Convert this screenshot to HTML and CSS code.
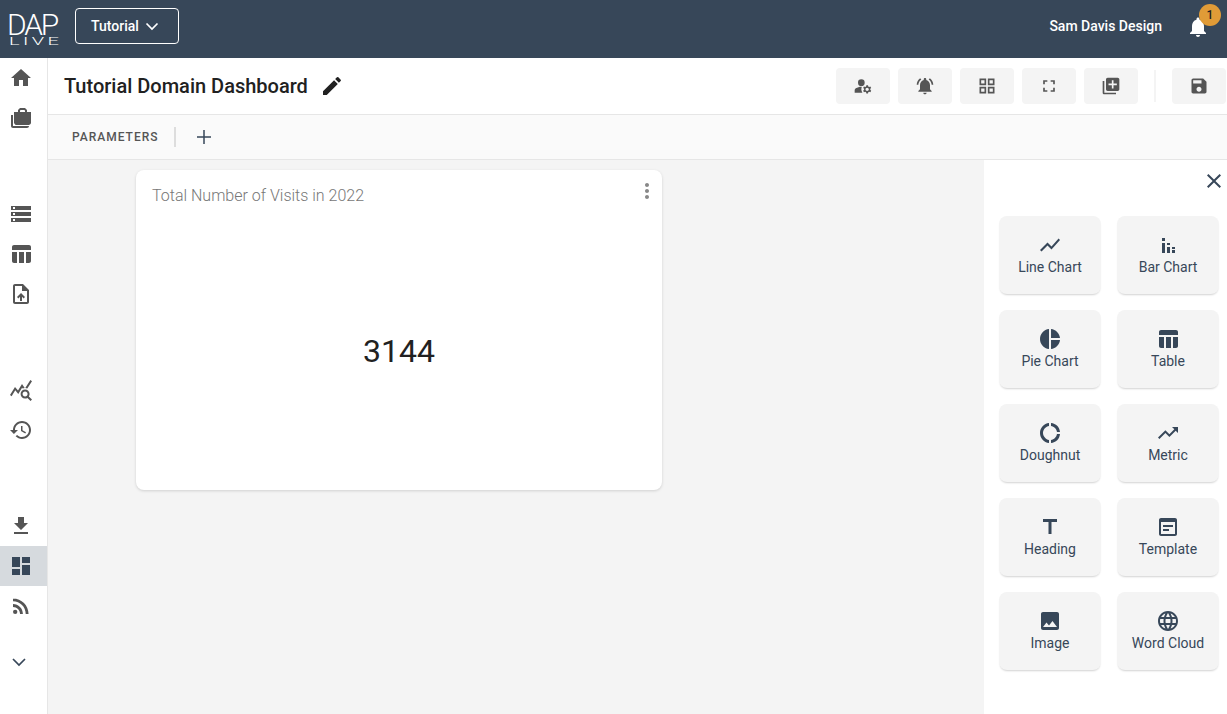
FILE: index.html
```html
<!DOCTYPE html>
<html>
<head>
    <meta charset="UTF-8">
    <title>Tutorial Domain Dashboard</title>
    <link rel="stylesheet" href="styles.css">
</head>
<body>
    <header class="topbar">
        <div class="logo">
            <span class="logo-main">DAP</span>
            <span class="logo-sub">LIVE</span>
        </div>
        <button class="domain-btn">
            <span>Tutorial</span>
            <svg class="icon chevron" viewBox="0 0 24 24"><path d="M6.5 9.5 12 15l5.5-5.5"/></svg>
        </button>
        <div class="topbar-right">
            <span class="user-name">Sam Davis Design</span>
            <div class="bell">
                <svg class="icon" viewBox="0 0 24 24"><path d="M12 22c1.1 0 2-.9 2-2h-4c0 1.1.9 2 2 2zm6-6v-5c0-3.07-1.63-5.64-4.5-6.32V4c0-.83-.67-1.5-1.5-1.5s-1.5.67-1.5 1.5v.68C7.64 5.36 6 7.92 6 11v5l-2 2v1h16v-1l-2-2z"/></svg>
                <span class="badge">1</span>
            </div>
        </div>
    </header>

    <div class="shell">
        <nav class="sidebar">
            <div class="nav-group">
                <a class="nav-item"><svg class="icon" viewBox="0 0 24 24"><path d="M10 20v-6h4v6h5v-8h3L12 3 2 12h3v8z"/></svg></a>
                <a class="nav-item"><svg class="icon" viewBox="0 0 24 24"><path d="M18 6V4l-2-2h-5L9 4v2H5v11s1 2 2 2h13s2-.98 2-2V6h-4zM4 9H2v11c0 1.11.89 2 2 2h14c1.11 0 2-.89 2-2H4V9zm7-4c0-.55.53-1 1-1h3c.46 0 1 .54 1 1v1h-5V5z"/></svg></a>
            </div>
            <div class="nav-group">
                <a class="nav-item"><svg class="icon" viewBox="0 0 24 24"><path d="M2 20h20v-4H2v4zm2-3h2v2H4v-2zM2 4v4h20V4H2zm4 3H4V5h2v2zm-4 7h20v-4H2v4zm2-3h2v2H4v-2z"/></svg></a>
                <a class="nav-item"><svg class="icon" viewBox="0 0 24 24"><path d="M10 10.02h5V21h-5zM17 21h3c1.1 0 2-.9 2-2v-9h-5v11zm3-18H5c-1.1 0-2 .9-2 2v3h19V5c0-1.1-.9-2-2-2zM3 19c0 1.1.9 2 2 2h3V10H3v9z"/></svg></a>
                <a class="nav-item"><svg class="icon" viewBox="0 0 24 24"><path d="M14 2H6c-1.1 0-1.99.9-1.99 2L4 20c0 1.1.89 2 1.99 2H18c1.1 0 2-.9 2-2V8l-6-6zm4 18H6V4h7v5h5v11zM8 15.01l1.41 1.41L11 14.84V19h2v-4.16l1.59 1.59L16 15.01 12.01 11z"/></svg></a>
            </div>
            <div class="nav-group">
                <a class="nav-item"><svg class="icon" viewBox="0 0 24 24"><path d="M19.88 18.47c.44-.7.7-1.51.7-2.39 0-2.49-2.01-4.5-4.5-4.5s-4.5 2.01-4.5 4.5 2.01 4.5 4.49 4.5c.88 0 1.7-.26 2.39-.7L21.58 23 23 21.58l-3.12-3.11zm-3.8.11c-1.38 0-2.5-1.12-2.5-2.5s1.12-2.5 2.5-2.5 2.5 1.12 2.5 2.5-1.12 2.5-2.5 2.5zm-.36-8.5c-.74.02-1.45.18-2.1.45l-.55-.83-3.8 6.18-3.01-3.52-3.63 5.81L1 17l5-8 3 3.5L13 6l2.72 4.08zm2.59.5c-.64-.28-1.33-.45-2.05-.49L21.38 2 23 3.18l-4.69 7.4z"/></svg></a>
                <a class="nav-item"><svg class="icon" viewBox="0 0 24 24"><path d="M13 3c-4.97 0-9 4.03-9 9H1l3.89 3.89.07.14L9 12H6c0-3.87 3.13-7 7-7s7 3.13 7 7-3.13 7-7 7c-1.93 0-3.68-.79-4.94-2.06l-1.42 1.42C8.27 19.99 10.51 21 13 21c4.97 0 9-4.03 9-9s-4.03-9-9-9zm-1 5v5l4.28 2.54.72-1.21-3.5-2.08V8H12z"/></svg></a>
            </div>
            <div class="nav-group">
                <a class="nav-item"><svg class="icon" viewBox="0 0 24 24"><path d="M19 9h-4V3H9v6H5l7 7 7-7zM5 18v2h14v-2H5z"/></svg></a>
                <a class="nav-item active"><svg class="icon" viewBox="0 0 24 24"><path d="M3 13h8V3H3v10zm0 8h8v-6H3v6zm10 0h8V11h-8v10zm0-18v6h8V3h-8z"/></svg></a>
                <a class="nav-item"><svg class="icon" viewBox="0 0 24 24"><circle cx="6.18" cy="17.82" r="2.18"/><path d="M4 4.44v2.83c7.03 0 12.73 5.7 12.73 12.73h2.83c0-8.59-6.97-15.56-15.56-15.56zm0 5.66v2.83c3.9 0 7.07 3.17 7.07 7.07h2.83c0-5.47-4.43-9.9-9.9-9.9z"/></svg></a>
            </div>
            <a class="nav-item nav-more"><svg class="icon chevron" viewBox="0 0 24 24"><path d="M6 9 12 15l6-6"/></svg></a>
        </nav>

        <main class="main">
            <div class="toolbar">
                <h1 class="page-title">Tutorial Domain Dashboard</h1>
                <svg class="icon edit-icon" viewBox="0 0 24 24"><path d="M3 17.25V21h3.75L17.81 9.94l-3.75-3.75L3 17.25zM20.71 7.04c.39-.39.39-1.02 0-1.41l-2.34-2.34a.9959.9959 0 0 0-1.41 0l-1.83 1.83 3.75 3.75 1.83-1.83z"/></svg>
                <div class="tool-buttons">
                    <button class="tool-btn"><svg class="icon" viewBox="0 0 24 24"><circle cx="10" cy="8" r="4"/><path d="M10.67 13.02C10.45 13.01 10.23 13 10 13c-2.42 0-4.68.67-6.61 1.82C2.51 15.34 2 16.32 2 17.35V20h9.26c-.79-1.13-1.26-2.51-1.26-4 0-1.07.25-2.07.67-2.98z"/><path d="M20.75 16c0-.22-.03-.42-.06-.63l1.14-1.01-1-1.73-1.45.49c-.32-.27-.68-.48-1.08-.63L18 11h-2l-.3 1.49c-.4.15-.76.36-1.08.63l-1.45-.49-1 1.73 1.14 1.01c-.03.21-.06.41-.06.63s.03.42.06.63l-1.14 1.01 1 1.73 1.45-.49c.32.27.68.48 1.08.63L16 21h2l.3-1.49c.4-.15.76-.36 1.08-.63l1.45.49 1-1.73-1.14-1.01c.03-.21.06-.41.06-.63zM17 18c-1.1 0-2-.9-2-2s.9-2 2-2 2 .9 2 2-.9 2-2 2z"/></svg></button>
                    <button class="tool-btn"><svg class="icon" viewBox="0 0 24 24"><path d="M7.58 4.08 6.15 2.65C3.75 4.48 2.17 7.3 2.03 10.5h2c.15-2.65 1.51-4.97 3.55-6.42zm12.39 6.42h2c-.15-3.2-1.73-6.02-4.12-7.85l-1.42 1.43c2.02 1.45 3.39 3.77 3.54 6.42zM18 11c0-3.07-1.64-5.64-4.5-6.32V4c0-.83-.67-1.5-1.5-1.5s-1.5.67-1.5 1.5v.68C7.63 5.36 6 7.92 6 11v5l-2 2v1h16v-1l-2-2v-5zm-6 11c.14 0 .27-.01.4-.04.65-.14 1.18-.58 1.44-1.18.1-.24.15-.5.15-.78h-4c.01 1.1.9 2 2.01 2z"/></svg></button>
                    <button class="tool-btn"><svg class="icon" viewBox="0 0 24 24"><path d="M3 3v8h8V3H3zm6 6H5V5h4v4zm-6 4v8h8v-8H3zm6 6H5v-4h4v4zm4-16v8h8V3h-8zm6 6h-4V5h4v4zm-6 4v8h8v-8h-8zm6 6h-4v-4h4v4z"/></svg></button>
                    <button class="tool-btn"><svg class="icon" viewBox="0 0 24 24"><path d="M7 14H5v5h5v-2H7v-3zm-2-4h2V7h3V5H5v5zm12 7h-3v2h5v-5h-2v3zM14 5v2h3v3h2V5h-5z"/></svg></button>
                    <button class="tool-btn"><svg class="icon" viewBox="0 0 24 24"><path d="M4 6H2v14c0 1.1.9 2 2 2h14v-2H4V6zm16-4H8c-1.1 0-2 .9-2 2v12c0 1.1.9 2 2 2h12c1.1 0 2-.9 2-2V4c0-1.1-.9-2-2-2zm-1 9h-4v4h-2v-4H9V9h4V5h2v4h4v2z"/></svg></button>
                    <span class="tool-divider"></span>
                    <button class="tool-btn"><svg class="icon" viewBox="0 0 24 24"><path d="M17 3H5c-1.11 0-2 .9-2 2v14c0 1.1.89 2 2 2h14c1.1 0 2-.9 2-2V7l-4-4zm-5 16c-1.66 0-3-1.34-3-3s1.34-3 3-3 3 1.34 3 3-1.34 3-3 3zm3-10H5V5h10v4z"/></svg></button>
                </div>
            </div>

            <div class="params">
                <span class="params-label">PARAMETERS</span>
                <span class="params-divider"></span>
                <svg class="icon params-add" viewBox="0 0 24 24"><path d="M19 12.75h-6.25V19h-1.5v-6.25H5v-1.5h6.25V5h1.5v6.25H19z"/></svg>
            </div>

            <div class="workspace">
                <div class="canvas">
                    <div class="card">
                        <div class="card-head">
                            <span class="card-title">Total Number of Visits in 2022</span>
                            <svg class="icon card-menu" viewBox="0 0 24 24"><path d="M12 8c1.1 0 2-.9 2-2s-.9-2-2-2-2 .9-2 2 .9 2 2 2zm0 2c-1.1 0-2 .9-2 2s.9 2 2 2 2-.9 2-2-.9-2-2-2zm0 6c-1.1 0-2 .9-2 2s.9 2 2 2 2-.9 2-2-.9-2-2-2z"/></svg>
                        </div>
                        <div class="card-value">3144</div>
                    </div>
                </div>

                <aside class="panel">
                    <div class="panel-head">
                        <svg class="icon" viewBox="0 0 24 24"><path d="M19 6.41 17.59 5 12 10.59 6.41 5 5 6.41 10.59 12 5 17.59 6.41 19 12 13.41 17.59 19 19 17.59 13.41 12z"/></svg>
                    </div>
                    <div class="tile-grid">
                        <div class="tile">
                            <svg class="icon" viewBox="0 0 24 24"><path d="M3.5 18.49l6-6.01 4 4L22 6.92l-1.41-1.41-7.09 7.97-4-4L2 16.99z"/></svg>
                            <span>Line Chart</span>
                        </div>
                        <div class="tile">
                            <svg class="icon" viewBox="0 0 24 24"><path d="M6 5h3v3H6zM6 10h3v10H6zM11 10h3v2h-3zM11 14h3v6h-3zM16 14h3v2h-3zM16 17h3v3h-3z"/></svg>
                            <span>Bar Chart</span>
                        </div>
                        <div class="tile">
                            <svg class="icon" viewBox="0 0 24 24"><path d="M11 2v20c-5.07-.5-9-4.79-9-10s3.93-9.5 9-10zm2.03 0v8.99H22c-.47-4.74-4.24-8.52-8.97-8.99zm0 11.01V22c4.74-.47 8.5-4.25 8.97-8.99h-8.97z"/></svg>
                            <span>Pie Chart</span>
                        </div>
                        <div class="tile">
                            <svg class="icon" viewBox="0 0 24 24"><path d="M10 10.02h5V21h-5zM17 21h3c1.1 0 2-.9 2-2v-9h-5v11zm3-18H5c-1.1 0-2 .9-2 2v3h19V5c0-1.1-.9-2-2-2zM3 19c0 1.1.9 2 2 2h3V10H3v9z"/></svg>
                            <span>Table</span>
                        </div>
                        <div class="tile">
                            <svg class="icon" viewBox="0 0 24 24"><path d="M11 5.08V2c-5 .5-9 4.81-9 10s4 9.5 9 10v-3.08c-3-.48-6-3.4-6-6.92s3-6.44 6-6.92zM18.97 11H22c-.47-5-4-8.53-9-9v3.08C16 5.51 18.54 8 18.97 11zM13 18.92V22c5-.47 8.53-4 9-9h-3.03c-.43 3-2.97 5.49-5.97 5.92z"/></svg>
                            <span>Doughnut</span>
                        </div>
                        <div class="tile">
                            <svg class="icon" viewBox="0 0 24 24"><path d="M16 6l2.29 2.29-4.88 4.88-4-4L2 16.59 3.41 18l6-6 4 4 6.3-6.29L22 12V6z"/></svg>
                            <span>Metric</span>
                        </div>
                        <div class="tile">
                            <svg class="icon" viewBox="0 0 24 24"><path d="M5 4v3h5.5v12h3V7H19V4z"/></svg>
                            <span>Heading</span>
                        </div>
                        <div class="tile">
                            <svg class="icon" viewBox="0 0 24 24"><path fill-rule="evenodd" d="M19 3H5c-1.1 0-2 .9-2 2v14c0 1.1.9 2 2 2h14c1.1 0 2-.9 2-2V5c0-1.1-.9-2-2-2zm0 16H5V7h14v12z"/><path d="M7 10h10v2H7zM7 14h6v2H7z"/></svg>
                            <span>Template</span>
                        </div>
                        <div class="tile">
                            <svg class="icon" viewBox="0 0 24 24"><path d="M21 19V5c0-1.1-.9-2-2-2H5c-1.1 0-2 .9-2 2v14c0 1.1.9 2 2 2h14c1.1 0 2-.9 2-2zM8.5 13.5l2.5 3.01L14.5 12l4.5 6H5l3.5-4.5z"/></svg>
                            <span>Image</span>
                        </div>
                        <div class="tile">
                            <svg class="icon" viewBox="0 0 24 24"><path d="M11.99 2C6.47 2 2 6.48 2 12s4.47 10 9.99 10C17.52 22 22 17.52 22 12S17.52 2 11.99 2zm6.93 6h-2.95c-.32-1.25-.78-2.45-1.38-3.56 1.84.63 3.37 1.91 4.33 3.56zM12 4.04c.83 1.2 1.48 2.53 1.91 3.96h-3.82c.43-1.43 1.08-2.76 1.91-3.96zM4.26 14C4.1 13.36 4 12.69 4 12s.1-1.36.26-2h3.38c-.08.66-.14 1.32-.14 2 0 .68.06 1.34.14 2H4.26zm.82 2h2.95c.32 1.25.78 2.45 1.38 3.56-1.84-.63-3.37-1.9-4.33-3.56zm2.95-8H5.08c.96-1.66 2.49-2.93 4.33-3.56C8.81 5.55 8.35 6.75 8.03 8zM12 19.96c-.83-1.2-1.48-2.53-1.91-3.96h3.82c-.43 1.43-1.08 2.76-1.91 3.96zM14.34 14H9.66c-.09-.66-.16-1.32-.16-2 0-.68.07-1.35.16-2h4.68c.09.65.16 1.32.16 2 0 .68-.07 1.34-.16 2zm.25 5.56c.6-1.11 1.06-2.31 1.38-3.56h2.95c-.96 1.65-2.49 2.93-4.33 3.56zM16.36 14c.08-.66.14-1.32.14-2 0-.68-.06-1.34-.14-2h3.38c.16.64.26 1.31.26 2s-.1 1.36-.26 2h-3.38z"/></svg>
                            <span>Word Cloud</span>
                        </div>
                    </div>
                </aside>
            </div>
        </main>
    </div>
</body>
</html>
```

FILE: styles.css
```css
* {
    box-sizing: border-box;
}
html, body {
    height: 100%;
}
body {
    margin: 0;
    font-family: Roboto, "Liberation Sans", sans-serif;
    color: #212121;
    background-color: #fff;
    overflow: hidden;
    display: flex;
    flex-direction: column;
}
.icon {
    display: block;
    width: 24px;
    height: 24px;
    fill: currentColor;
    flex-shrink: 0;
}
.chevron {
    fill: none;
    stroke: currentColor;
    stroke-width: 1.7;
}

/* top bar */
.topbar {
    height: 58px;
    flex-shrink: 0;
    display: flex;
    align-items: center;
    padding: 0 0 6px 9px;
    background-color: #374759;
    color: #fff;
}
.logo {
    width: 50px;
    display: flex;
    flex-direction: column;
    margin-top: 6px;
}
.logo-main {
    font-size: 30px;
    font-weight: 300;
    line-height: 24px;
    letter-spacing: -2.2px;
    margin-left: -2px;
}
.logo-sub {
    font-size: 10px;
    font-weight: 300;
    line-height: 8px;
    letter-spacing: 1.7px;
    white-space: nowrap;
    transform: scaleX(2);
    transform-origin: left;
    margin-top: 1px;
}
.domain-btn {
    width: 104px;
    height: 36px;
    margin-left: 16px;
    padding: 0 0 0 15px;
    display: flex;
    align-items: center;
    gap: 1px;
    background: none;
    border: 1px solid #fff;
    border-radius: 4px;
    color: #fff;
    font-family: inherit;
    font-size: 14px;
    font-weight: 500;
}
.topbar-right {
    margin-left: auto;
    display: flex;
    align-items: center;
}
.user-name {
    font-size: 14px;
    font-weight: 500;
}
.bell {
    position: relative;
    margin: 2px 17px 0 24px;
}
.badge {
    position: absolute;
    top: -11px;
    left: 13px;
    width: 22px;
    height: 22px;
    border-radius: 50%;
    background-color: #e09b37;
    color: #212121;
    font-size: 12px;
    font-weight: 500;
    line-height: 22px;
    text-align: center;
}

/* left nav */
.shell {
    flex: 1;
    min-height: 0;
    display: flex;
}
.sidebar {
    width: 48px;
    flex-shrink: 0;
    display: flex;
    flex-direction: column;
    border-right: 1px solid #e6e6e6;
    color: #555;
}
.nav-group {
    margin-bottom: 56px;
}
.nav-group:last-of-type {
    margin-bottom: 16px;
}
.nav-item {
    height: 40px;
    padding-left: 9px;
    display: flex;
    align-items: center;
}
.nav-item.active {
    background-color: #d6dade;
    color: #374759;
}
.nav-more {
    padding-left: 7px;
    color: #374759;
}

/* title row */
.main {
    flex: 1;
    min-width: 0;
    display: flex;
    flex-direction: column;
}
.toolbar {
    height: 57px;
    flex-shrink: 0;
    display: flex;
    align-items: center;
    padding: 0 1px 0 16px;
    border-bottom: 1px solid #e6e6e6;
}
.page-title {
    margin: 0;
    font-size: 20px;
    font-weight: 500;
    color: #212121;
}
.edit-icon {
    margin-left: 12px;
}
.tool-buttons {
    margin-left: auto;
    display: flex;
    align-items: center;
    gap: 8px;
}
.tool-btn {
    width: 54px;
    height: 36px;
    padding: 0;
    display: flex;
    align-items: center;
    justify-content: center;
    background-color: #f4f4f4;
    border: none;
    border-radius: 4px;
    color: #555;
}
.tool-btn .icon {
    width: 20px;
    height: 20px;
}
.tool-divider {
    width: 2px;
    height: 32px;
    margin: 0 8px;
    background-color: #f4f4f4;
}

/* parameters row */
.params {
    height: 45px;
    flex-shrink: 0;
    display: flex;
    align-items: center;
    padding-left: 24px;
    background-color: #fafafa;
    border-bottom: 1px solid #e6e6e6;
}
.params-label {
    font-size: 12px;
    font-weight: 500;
    letter-spacing: 1px;
    color: #555;
}
.params-divider {
    width: 2px;
    height: 20px;
    margin-left: 15px;
    background-color: #ddd;
}
.params-add {
    margin-left: 16px;
    color: #374759;
}

/* canvas and widget card */
.workspace {
    flex: 1;
    min-height: 0;
    display: flex;
}
.canvas {
    flex: 1;
    padding: 10px 0 0 88px;
    background-color: #f4f4f4;
}
.card {
    width: 526px;
    height: 320px;
    display: flex;
    flex-direction: column;
    background-color: #fff;
    border-radius: 8px;
    box-shadow: 0 1px 3px rgba(0, 0, 0, 0.15);
}
.card-head {
    display: flex;
    justify-content: space-between;
    padding: 10px 3px 0 16px;
}
.card-title {
    font-size: 16px;
    font-weight: 300;
    line-height: 32px;
    color: #777;
}
.card-menu {
    margin-top: -1px;
    color: #888;
}
.card-value {
    margin-top: 119px;
    font-size: 32px;
    line-height: 40px;
    text-align: center;
    color: #212121;
}

/* widget picker */
.panel {
    width: 243px;
    flex-shrink: 0;
    padding: 9px 1px 0 15px;
    background-color: #fff;
    color: #374759;
}
.panel-head {
    display: flex;
    justify-content: flex-end;
    margin-bottom: 23px;
}
.tile-grid {
    display: grid;
    grid-template-columns: 102px 102px;
    grid-auto-rows: 78px;
    gap: 16px;
}
.tile {
    display: flex;
    flex-direction: column;
    align-items: center;
    padding-top: 17px;
    background-color: #f4f4f4;
    border-radius: 8px;
    box-shadow: 0 2px 2px -1px rgba(0, 0, 0, 0.18);
    font-size: 14px;
    line-height: 20px;
}
```
